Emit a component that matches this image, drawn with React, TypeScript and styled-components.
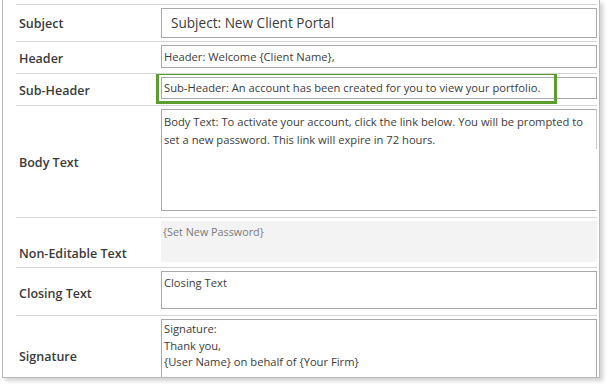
import React from 'react';
import styled, { createGlobalStyle } from 'styled-components';

const GlobalStyle = createGlobalStyle`
  html, body {
    margin: 0;
    padding: 0;
    background: #fff;
  }
  body {
    font-family: 'Open Sans', 'Noto Sans', sans-serif;
    color: #333;
  }
`;

const App: React.FC = () => {
  return (
    <>
      <GlobalStyle />
      <Page>
        <Panel>
          <Row $height={37}>
            <Label $top={10}>Subject</Label>
            <Cell>
              <SubjectInput>Subject: New Client Portal</SubjectInput>
            </Cell>
          </Row>
          <Row $height={32}>
            <Label $top={8}>Header</Label>
            <Cell>
              <LineInput>Header: Welcome {'{Client Name}'},</LineInput>
            </Cell>
          </Row>
          <Row $height={32}>
            <Label $top={8}>Sub-Header</Label>
            <Cell>
              <LineInput $height={22}>
                Sub-Header: An account has been created for you to view your portfolio.
              </LineInput>
              <Highlight />
            </Cell>
          </Row>
          <Row $height={112}>
            <Label $top={48}>Body Text</Label>
            <Cell>
              <BodyArea>
                Body Text: To activate your account, click the link below. You will be prompted to
                set a new password. This link will expire in 72 hours.
              </BodyArea>
            </Cell>
          </Row>
          <Row $height={50}>
            <Label $top={27}>Non-Editable Text</Label>
            <Cell>
              <ReadOnly>{'{Set New Password}'}</ReadOnly>
            </Cell>
          </Row>
          <Row $height={48}>
            <Label $top={17}>Closing Text</Label>
            <Cell>
              <TextArea $height={38}>Closing Text</TextArea>
            </Cell>
          </Row>
          <Row $height={62}>
            <Label $top={32}>Signature</Label>
            <Cell>
              <SignatureArea>
                Signature:
                <br />
                Thank you,
                <br />
                {'{User Name}'} on behalf of {'{Your Firm}'}
              </SignatureArea>
            </Cell>
          </Row>
        </Panel>
      </Page>
    </>
  );
};

const Page = styled.div`
  width: 609px;
  height: 387px;
  overflow: hidden;
  padding-left: 2px;
  box-sizing: border-box;
`;

const Panel = styled.div`
  width: 598px;
  box-sizing: border-box;
  border: 1px solid #b9b9b9;
  border-top: none;
  background: #fff;
  padding: 4px 2px 0 13px;
  box-shadow: 3px 3px 4px rgba(0, 0, 0, 0.18);
`;

const Row = styled.div<{ $height: number }>`
  display: grid;
  grid-template-columns: 145px 1fr;
  height: ${(p) => p.$height}px;
  border-top: 1px solid #d4d4d4;
  box-sizing: border-box;
  overflow: hidden;
`;

const Label = styled.div<{ $top: number }>`
  padding-top: ${(p) => p.$top}px;
  padding-left: 3px;
  font-size: 12.5px;
  font-weight: 600;
  line-height: 18px;
  color: #3a3a3a;
`;

const Cell = styled.div`
  position: relative;
  padding-top: 3px;
`;

const Box = styled.div`
  box-sizing: border-box;
  border: 1px solid #a9a9a9;
  background: #fff;
  color: #3c3c3c;
  font-size: 11.2px;
  line-height: 18px;
  padding: 0 2px;
  white-space: nowrap;
`;

const SubjectInput = styled(Box)`
  height: 30px;
  font-size: 13.6px;
  line-height: 28px;
  padding-left: 9px;
`;

const LineInput = styled(Box)<{ $height?: number }>`
  height: ${(p) => p.$height ?? 23}px;
  line-height: ${(p) => (p.$height ?? 23) - 2}px;
`;

const TextArea = styled(Box)<{ $height: number }>`
  height: ${(p) => p.$height}px;
  padding-top: 2px;
  white-space: normal;
`;

const BodyArea = styled(Box)`
  position: relative;
  height: 102px;
  padding-top: 3px;
  white-space: normal;
  border-right-color: transparent;

  &::after {
    content: '';
    position: absolute;
    right: -1px;
    top: -1px;
    width: 1px;
    height: 40px;
    background: #c8c8c8;
  }
`;

const ReadOnly = styled(Box)`
  height: 41px;
  border: none;
  background: #f3f3f3;
  color: #7a7a7a;
  font-size: 10.8px;
  padding-top: 2px;
`;

const SignatureArea = styled(Box)`
  height: 60px;
  border-bottom: none;
  line-height: 16.5px;
  padding-top: 1px;
  white-space: normal;
`;

const Highlight = styled.div`
  position: absolute;
  left: -5px;
  top: -2px;
  width: 401px;
  height: 32px;
  box-sizing: border-box;
  border: 3px solid #5c9e2e;
  pointer-events: none;
`;

export default App;
